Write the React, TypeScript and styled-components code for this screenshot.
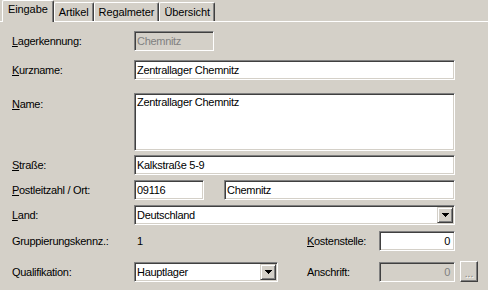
import React from 'react';
import styled, { createGlobalStyle } from 'styled-components';

const GlobalStyle = createGlobalStyle`
  html, body { margin: 0; padding: 0; background: #d4d0c8; }
  body {
    font-family: "Liberation Sans", Arial, sans-serif;
    font-size: 11px;
    letter-spacing: -0.3px;
    color: #000;
  }
  * { box-sizing: border-box; }
`;

const Window = styled.div`
  width: 488px;
  height: 290px;
  overflow: hidden;
  background: #d4d0c8;
`;

const TabStrip = styled.div`
  display: flex;
  align-items: flex-end;
  height: 22px;
  padding-left: 2px;
  border-bottom: 1px solid #fff;
`;

const Tab = styled.div<{ $active?: boolean }>`
  position: relative;
  z-index: ${p => (p.$active ? 1 : 0)};
  height: ${p => (p.$active ? 22 : 19)}px;
  margin-bottom: ${p => (p.$active ? -1 : 0)}px;
  padding: ${p => (p.$active ? '2px 5px 0' : '3px 4px 0')};
  line-height: 13px;
  letter-spacing: -0.1px;
  background: #d4d0c8;
  border-left: 1px solid #fff;
  border-top: 1px solid #fff;
  border-right: 1px solid #404040;
  border-radius: 2px 2px 0 0;
  box-shadow: inset -1px 0 #808080;
  white-space: nowrap;
`;

const Panel = styled.div`
  display: flex;
  flex-direction: column;
  padding: 9px 0 0 12px;
`;

const Row = styled.div<{ $mt: number; $top?: boolean }>`
  display: flex;
  align-items: ${p => (p.$top ? 'flex-start' : 'center')};
  margin-top: ${p => p.$mt}px;
`;

const Label = styled.label<{ $w?: number; $pt?: number }>`
  flex: none;
  width: ${p => p.$w ?? 122}px;
  padding-top: ${p => p.$pt ?? 0}px;
  white-space: nowrap;
`;

const Key = styled.span`
  text-decoration: underline;
  text-underline-offset: 1px;
`;

const Field = styled.div<{
  $w: number;
  $h?: number;
  $disabled?: boolean;
  $right?: boolean;
  $multi?: boolean;
  $ml?: number;
}>`
  flex: none;
  display: flex;
  align-items: ${p => (p.$multi ? 'flex-start' : 'center')};
  justify-content: ${p => (p.$right ? 'flex-end' : 'flex-start')};
  width: ${p => p.$w}px;
  height: ${p => p.$h ?? 20}px;
  margin-left: ${p => p.$ml ?? 0}px;
  padding: ${p => (p.$multi ? '2px 2px 0 2px' : p.$right ? '0 4px 0 2px' : '0 2px')};
  background: ${p => (p.$disabled ? '#d4d0c8' : '#fff')};
  color: ${p => (p.$disabled ? '#808080' : '#000')};
  border: 1px solid;
  border-color: #808080 #fff #fff #808080;
  box-shadow: inset 1px 1px #404040, inset -1px -1px #d4d0c8;
  white-space: nowrap;
  overflow: hidden;
`;

const Combo = styled(Field)`
  padding-right: 1px;
`;

const ComboText = styled.span`
  flex: 1;
`;

const DropButton = styled.div`
  flex: none;
  width: 16px;
  height: 16px;
  display: flex;
  align-items: center;
  justify-content: center;
  background: #d4d0c8;
  border: 1px solid;
  border-color: #d4d0c8 #404040 #404040 #d4d0c8;
  box-shadow: inset 1px 1px #fff, inset -1px -1px #808080;
`;

const Value = styled.div<{ $w: number }>`
  flex: none;
  width: ${p => p.$w}px;
  padding-left: 3px;
`;

const Cell = styled.div<{ $w: number }>`
  flex: none;
  width: ${p => p.$w}px;
  display: flex;
`;

const DotsButton = styled.div`
  flex: none;
  width: 18px;
  height: 21px;
  margin-left: 5px;
  display: flex;
  align-items: center;
  justify-content: center;
  padding-top: 3px;
  color: #808080;
  text-shadow: 1px 1px #fff;
  font-size: 10px;
  letter-spacing: 0;
  background: #d4d0c8;
  border: 1px solid;
  border-color: #fff #404040 #404040 #fff;
  box-shadow: inset -1px -1px #808080;
`;

const Arrow = () => (
  <svg width="7" height="4" viewBox="0 0 7 4">
    <path d="M0 0h7L3.5 4z" fill="#000" shapeRendering="crispEdges" />
  </svg>
);

export default function App() {
  return (
    <Window>
      <GlobalStyle />
      <TabStrip>
        <Tab $active>Eingabe</Tab>
        <Tab>Artikel</Tab>
        <Tab>Regalmeter</Tab>
        <Tab>Übersicht</Tab>
      </TabStrip>
      <Panel>
        <Row $mt={0}>
          <Label><Key>L</Key>agerkennung:</Label>
          <Field $w={80} $disabled>Chemnitz</Field>
        </Row>
        <Row $mt={9}>
          <Label><Key>K</Key>urzname:</Label>
          <Field $w={321}>Zentrallager Chemnitz</Field>
        </Row>
        <Row $mt={13} $top>
          <Label $pt={5}><Key>N</Key>ame:</Label>
          <Field $w={321} $h={58} $multi>Zentrallager Chemnitz</Field>
        </Row>
        <Row $mt={4}>
          <Label><Key>S</Key>traße:</Label>
          <Field $w={321}>Kalkstraße 5-9</Field>
        </Row>
        <Row $mt={5}>
          <Label><Key>P</Key>ostleitzahl / Ort:</Label>
          <Field $w={70}>09116</Field>
          <Field $w={231} $ml={20}>Chemnitz</Field>
        </Row>
        <Row $mt={5}>
          <Label><Key>L</Key>and:</Label>
          <Combo $w={321}>
            <ComboText>Deutschland</ComboText>
            <DropButton><Arrow /></DropButton>
          </Combo>
        </Row>
        <Row $mt={6}>
          <Label>Gruppierungskennz.:</Label>
          <Value $w={173}>1</Value>
          <Label $w={72}><Key>K</Key>ostenstelle:</Label>
          <Field $w={76} $right>0</Field>
        </Row>
        <Row $mt={10}>
          <Label>Qualifikation:</Label>
          <Cell $w={173}>
            <Combo $w={144}>
              <ComboText>Hauptlager</ComboText>
              <DropButton><Arrow /></DropButton>
            </Combo>
          </Cell>
          <Label $w={72}>Anschrift:</Label>
          <Field $w={76} $right $disabled>0</Field>
          <DotsButton>...</DotsButton>
        </Row>
      </Panel>
    </Window>
  );
}
